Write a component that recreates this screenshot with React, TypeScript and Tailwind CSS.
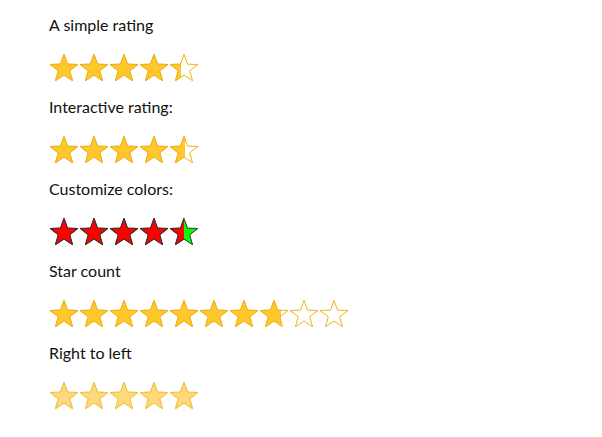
type StarProps = {
  fill: number;
  color?: string;
  rest?: string;
  stroke?: string;
};

const W = 28;
const H = 27;

function starPoints() {
  const R = 14.6;
  const r = R * 0.41;
  const cx = 14;
  const cy = R + 0.4;
  const pts: string[] = [];
  for (let i = 0; i < 10; i++) {
    const rad = i % 2 === 0 ? R : r;
    const a = (Math.PI / 5) * i - Math.PI / 2;
    pts.push(`${(cx + rad * Math.cos(a)).toFixed(2)},${(cy + rad * Math.sin(a)).toFixed(2)}`);
  }
  return pts.join(" ");
}

const POINTS = starPoints();

function StarShape({ fill, stroke }: { fill: string; stroke: string }) {
  return (
    <svg width={W} height={H} viewBox={`0 0 ${W} ${H}`} className="block">
      <polygon points={POINTS} fill={fill} stroke={stroke} strokeWidth="1" strokeLinejoin="miter" />
    </svg>
  );
}

function Star({ fill, color = "#ffc72c", rest = "#ffffff", stroke = "#ebb319" }: StarProps) {
  return (
    <span className="relative inline-block w-[28px] h-[27px] mr-[2px]">
      <StarShape fill={rest} stroke={stroke} />
      <span className="absolute left-0 top-0 h-[27px] overflow-hidden" style={{ width: `${fill * 100}%` }}>
        <StarShape fill={color} stroke={stroke} />
      </span>
    </span>
  );
}

function Rating({
  value,
  count = 5,
  color,
  rest,
  stroke,
}: {
  value: number;
  count?: number;
  color?: string;
  rest?: string;
  stroke?: string;
}) {
  return (
    <div className="flex h-[27px]">
      {Array.from({ length: count }, (_, i) => (
        <Star
          key={i}
          fill={Math.max(0, Math.min(1, value - i))}
          color={color}
          rest={rest}
          stroke={stroke}
        />
      ))}
    </div>
  );
}

function Section({ label, children }: { label: string; children: React.ReactNode }) {
  return (
    <div className="h-[82px]">
      <p className="text-[16px] leading-[20px] text-[#111]">{label}</p>
      <div className="mt-[19px] pl-[1px]">{children}</div>
    </div>
  );
}

export default function App() {
  return (
    <div className="bg-white min-h-screen pt-[15px] pl-[49px] font-['Lato','Open_Sans',sans-serif]">
      <Section label="A simple rating">
        <Rating value={4.4} />
      </Section>
      <Section label="Interactive rating:">
        <Rating value={4.55} />
      </Section>
      <Section label="Customize colors:">
        <Rating value={4.5} color="#ff0000" rest="#00ff00" stroke="#333333" />
      </Section>
      <Section label="Star count">
        <Rating value={7.75} count={10} />
      </Section>
      <Section label="Right to left">
        <Rating value={5} color="#fdd97c" stroke="#f2c13c" />
      </Section>
    </div>
  );
}
